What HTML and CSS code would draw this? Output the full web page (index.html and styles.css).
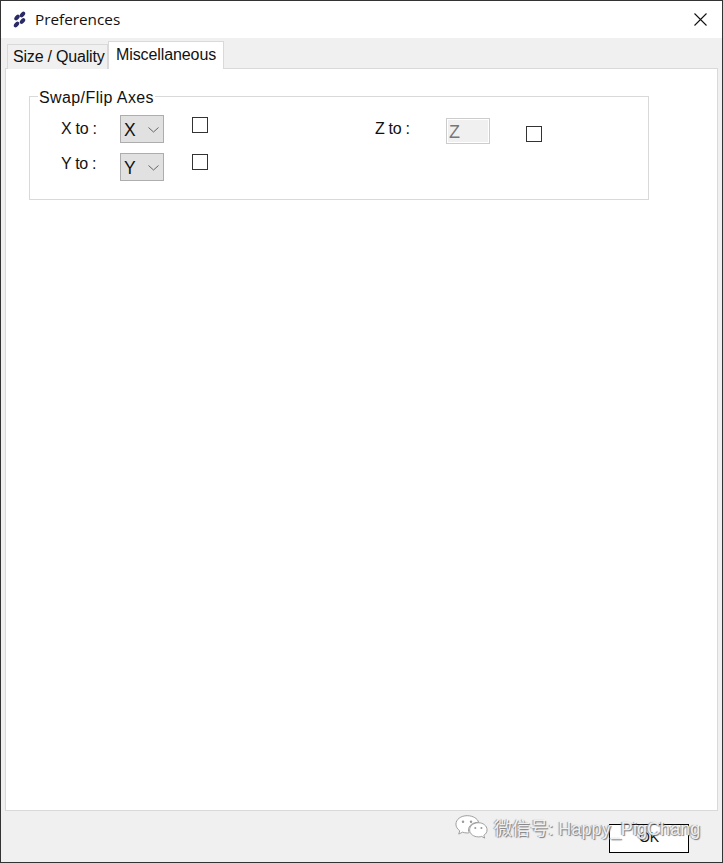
FILE: index.html
```html
<!DOCTYPE html>
<html lang="en">
<head>
<meta charset="utf-8">
<title>Preferences</title>
<link rel="stylesheet" href="styles.css">
</head>
<body>
<div class="window">
  <header class="titlebar">
    <svg class="app-icon" width="14" height="18" viewBox="0 0 14 18">
      <g fill="#2a2a66">
        <ellipse cx="9.500" cy="3.500" rx="3.300" ry="2.100" transform="rotate(-50 9.500 3.500)"/>
        <ellipse cx="4" cy="6.500" rx="3.300" ry="2.100" transform="rotate(-50 4 6.500)"/>
        <ellipse cx="9.500" cy="10" rx="3.300" ry="2.100" transform="rotate(-50 9.500 10)"/>
        <ellipse cx="3.500" cy="13.500" rx="3.300" ry="2.100" transform="rotate(-50 3.500 13.500)"/>
      </g>
    </svg>
    <span class="title">Preferences</span>
    <svg class="close" width="13" height="13" viewBox="0 0 13 13">
      <path d="M0.5 0.5L12.5 12.5M12.5 0.5L0.5 12.5" stroke="#111" stroke-width="1.1" fill="none"/>
    </svg>
  </header>
  <main class="content">
    <div class="tabs">
      <div class="tab">Size / Quality</div>
      <div class="tab tab-active">Miscellaneous</div>
    </div>
    <section class="pane">
      <fieldset class="group">
        <legend class="legend">Swap/Flip Axes</legend>
        <div class="axes">
          <div class="axis-column">
            <div class="axis-row">
              <span class="axis-label">X to :</span>
              <div class="combo"><span>X</span><svg width="11" height="6" viewBox="0 0 11 6"><path d="M0.5 0.5L5.500 5L10.500 0.500" stroke="#666" fill="none"/></svg></div>
              <span class="check"></span>
            </div>
            <div class="axis-row axis-row-second">
              <span class="axis-label">Y to :</span>
              <div class="combo"><span>Y</span><svg width="11" height="6" viewBox="0 0 11 6"><path d="M0.5 0.5L5.500 5L10.500 0.500" stroke="#666" fill="none"/></svg></div>
              <span class="check check-second"></span>
            </div>
          </div>
          <div class="axis-z">
            <span class="axis-label z-label">Z to :</span>
            <div class="readonly">Z</div>
            <span class="check z-check"></span>
          </div>
        </div>
      </fieldset>
    </section>
    <footer class="footer">
      <div class="ok">OK</div>
    </footer>
  </main>
  <div class="watermark">
    <svg width="33" height="26" viewBox="0 0 35 26">
      <path d="M13 1C6 1 1 5 1 10c0 3 1.500 5 4 7l-1 3.500 4-2c1.500.5 3 .8 5 .8 1 0 1.500 0 2-.2-.5-1-.7-2-.7-3 0-4.600 4.500-8 10-8h.8C24 4 19 1 13 1z" fill="#fff" stroke="#9a9a9a" stroke-width="1"/>
      <path d="M34 16c0-4.400-4.400-7.500-9-7.500-5.300 0-9.500 3.200-9.500 7.500s4.200 7.500 9.500 7.500c1.200 0 2.300-.2 3.300-.5l3.200 1.800-.9-3C32.700 20.500 34 18.500 34 16z" fill="#fff" stroke="#9a9a9a" stroke-width="1"/>
      <g fill="#9a9a9a"><circle cx="8.500" cy="7.500" r="1.300"/><circle cx="17" cy="7.500" r="1.300"/><circle cx="21.500" cy="14" r="1.100"/><circle cx="28" cy="14" r="1.100"/></g>
    </svg>
    <span class="watermark-text">微信号: Happy_PigChang</span>
  </div>
</div>
</body>
</html>
```

FILE: styles.css
```css
* { box-sizing: border-box; }
html, body { margin: 0; padding: 0; height: 100%; }
body { background: #fff; font-family: "Liberation Sans", Arial, sans-serif; font-size: 16px; color: #111; overflow: hidden; }
.window { position: relative; width: 723px; height: 863px; border: 1px solid #333; display: flex; flex-direction: column; background: #f0f0f0; }
.titlebar { height: 37px; flex: none; background: #fff; display: flex; align-items: center; padding: 0 15px 0 12px; }
.app-icon { flex: none; }
.title { font-family: "Open Sans", sans-serif; font-size: 15.3px; margin-left: 8px; padding-bottom: 2px; flex: 1; color: #111; }
.close { flex: none; }
.content { flex: 1; display: flex; flex-direction: column; padding: 2px 4px 9px; min-height: 0; }
.tabs { display: flex; align-items: flex-end; height: 29px; padding-left: 2px; margin-bottom: -1px; position: relative; z-index: 1; flex: none; }
.tab { height: 25px; width: 101px; border: 1px solid #d9d9d9; border-bottom: 0; background: #f0f0f0; padding: 3px 0 0 5px; white-space: nowrap; letter-spacing: -0.2px; }
.tab-active { height: 28px; width: 116px; background: #fff; padding: 4px 0 0 7px; letter-spacing: -0.1px; }
.pane { flex: 1; background: #fff; border: 1px solid #d9d9d9; padding: 17px 68px 0 23px; min-height: 0; }
.group { margin: 0; height: 114px; border: 1px solid #d9d9d9; padding: 0; min-width: 0; }
.legend { margin-left: 8px; padding: 2px 1px 0; font-size: 16px; letter-spacing: 0.4px; line-height: 19px; }
.axes { display: flex; padding: 8px 0 0 31px; }
.axis-column { width: 314px; flex: none; }
.axis-row { display: flex; align-items: flex-start; height: 28px; }
.axis-row-second { margin-top: 10px; }
.axis-label { width: 59px; flex: none; line-height: 28px; letter-spacing: -0.3px; }
.axis-row-second .axis-label { line-height: 22px; }
.combo { width: 44px; height: 28px; flex: none; background: #e1e1e1; border: 1px solid #adadad; display: flex; align-items: center; justify-content: space-between; padding: 2px 4px 0 3px; font-size: 17.5px; }
.combo svg { margin-top: -1px; }
.check { width: 16px; height: 16px; flex: none; border: 1px solid #333; background: #fff; margin: 2px 0 0 28px; }
.check-second { margin-top: 1px; }
.axis-z { display: flex; align-items: flex-start; padding-top: 3px; }
.z-label { width: 71px; line-height: 22px; }
.readonly { width: 44px; height: 26px; flex: none; background: #f0f0f0; border: 1px solid #ccc; outline: 1px solid #fff; outline-offset: -2px; color: #777; font-size: 18px; line-height: 26px; padding-left: 2px; }
.z-check { margin: 8px 0 0 36px; }
.footer { flex: none; height: 42px; display: flex; justify-content: flex-end; padding: 13px 29px 0 0; }
.ok { width: 80px; height: 29px; border: 1px solid #000; background: #fff; text-align: center; font-size: 14px; line-height: 25px; }
.watermark { position: absolute; left: 454px; top: 813px; display: flex; align-items: center; gap: 6px; }
.watermark-text { font-family: "Liberation Sans", "Noto Sans CJK SC", sans-serif; font-size: 18px; letter-spacing: 0.07px; color: rgba(255,255,255,0.85); text-shadow: 1px 1px 1px #777, -1px 0 1px #999; white-space: nowrap; }
```
